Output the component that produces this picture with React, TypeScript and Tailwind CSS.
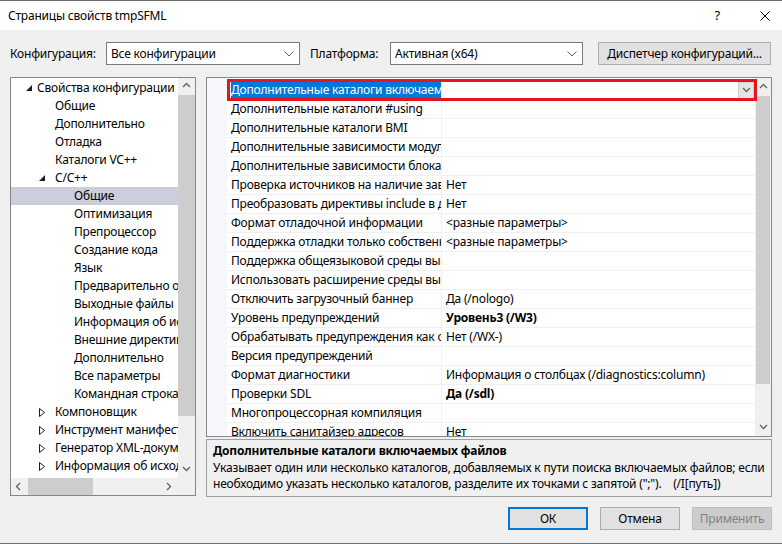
import React from "react";

type TreeItem = { text: string; level: 0 | 1 | 2; arrow?: "open" | "closed"; selected?: boolean };

const tree: TreeItem[] = [
  { text: "Свойства конфигурации", level: 0, arrow: "open" },
  { text: "Общие", level: 1 },
  { text: "Дополнительно", level: 1 },
  { text: "Отладка", level: 1 },
  { text: "Каталоги VC++", level: 1 },
  { text: "C/C++", level: 1, arrow: "open" },
  { text: "Общие", level: 2, selected: true },
  { text: "Оптимизация", level: 2 },
  { text: "Препроцессор", level: 2 },
  { text: "Создание кода", level: 2 },
  { text: "Язык", level: 2 },
  { text: "Предварительно откомпилированные заголовки", level: 2 },
  { text: "Выходные файлы", level: 2 },
  { text: "Информация об исходных файлах", level: 2 },
  { text: "Внешние директивы", level: 2 },
  { text: "Дополнительно", level: 2 },
  { text: "Все параметры", level: 2 },
  { text: "Командная строка", level: 2 },
  { text: "Компоновщик", level: 1, arrow: "closed" },
  { text: "Инструмент манифеста", level: 1, arrow: "closed" },
  { text: "Генератор XML-документов", level: 1, arrow: "closed" },
  { text: "Информация об исходном коде", level: 1, arrow: "closed" },
];

type Prop = { name: string; value?: string; bold?: boolean };

const props: Prop[] = [
  { name: "Дополнительные каталоги включаемых файлов" },
  { name: "Дополнительные каталоги #using" },
  { name: "Дополнительные каталоги BMI" },
  { name: "Дополнительные зависимости модулей" },
  { name: "Дополнительные зависимости блока заголовков" },
  { name: "Проверка источников на наличие зависимостей", value: "Нет" },
  { name: "Преобразовать директивы include в директивы import", value: "Нет" },
  { name: "Формат отладочной информации", value: "<разные параметры>" },
  { name: "Поддержка отладки только собственного кода", value: "<разные параметры>" },
  { name: "Поддержка общеязыковой среды выполнения" },
  { name: "Использовать расширение среды выполнения Windows" },
  { name: "Отключить загрузочный баннер", value: "Да (/nologo)" },
  { name: "Уровень предупреждений", value: "Уровень3 (/W3)", bold: true },
  { name: "Обрабатывать предупреждения как ошибки", value: "Нет (/WX-)" },
  { name: "Версия предупреждений" },
  { name: "Формат диагностики", value: "Информация о столбцах (/diagnostics:column)" },
  { name: "Проверки SDL", value: "Да (/sdl)", bold: true },
  { name: "Многопроцессорная компиляция" },
  { name: "Включить санитайзер адресов", value: "Нет" },
];

const Chevron = ({ dir }: { dir: "up" | "down" | "left" | "right" }) => {
  const pts = {
    up: "1,5 4.5,1.5 8,5",
    down: "1,2 4.5,5.5 8,2",
    left: "5,1 1.5,4.5 5,8",
    right: "2,1 5.5,4.5 2,8",
  }[dir];
  return (
    <svg width="9" height="9" viewBox="0 0 9 9">
      <polyline points={pts} fill="none" stroke="#606060" strokeWidth="1.3" />
    </svg>
  );
};

const Select = ({ value, w }: { value: string; w: string }) => (
  <div className={`${w} h-[23px] flex items-center bg-white border border-[#7a7a7a] pl-[4px] pr-[5px]`}>
    <span className="flex-1 text-[#000]">{value}</span>
    <svg width="10" height="6" viewBox="0 0 10 6">
      <polyline points="0.5,0.5 5,5 9.5,0.5" fill="none" stroke="#606060" strokeWidth="1" />
    </svg>
  </div>
);

export default function App() {
  return (
    <div
      className="w-[782px] h-[544px] flex flex-col border-t border-b border-[#6b6b6b] bg-[#f0f0f0] text-[12px] tracking-[-0.2px] text-black overflow-hidden"
      style={{ fontFamily: '"Segoe UI", "Noto Sans", sans-serif' }}
    >
      {/* Title bar */}
      <div className="h-[29px] bg-white flex items-center pl-[8px] shrink-0">
        <span className="flex-1 text-[12px]">Страницы свойств tmpSFML</span>
        <span className="mr-[40px] text-[13px]">?</span>
        <span className="mr-[12px] flex">
          <svg width="10" height="10" viewBox="0 0 10 10">
            <path d="M0.5,0.5 L9.5,9.5 M9.5,0.5 L0.5,9.5" stroke="#000" strokeWidth="1" />
          </svg>
        </span>
      </div>

      {/* Config row */}
      <div className="flex items-center mt-[12px] pl-[10px] h-[23px] shrink-0">
        <span className="w-[96px]">Конфигурация:</span>
        <Select value="Все конфигурации" w="w-[194px]" />
        <span className="ml-[10px] w-[80px]">Платформа:</span>
        <Select value="Активная (x64)" w="w-[193px]" />
        <div className="ml-[15px] w-[173px] h-[23px] border border-[#adadad] bg-[#e1e1e1] flex items-center justify-center">
          Диспетчер конфигураций...
        </div>
      </div>

      {/* Main area */}
      <div className="flex mt-[12px] pl-[10px] gap-[10px] shrink-0">
        {/* Tree */}
        <div className="w-[186px] h-[419px] border border-[#828790] bg-white flex flex-col">
          <div className="flex flex-1 min-h-0">
            <div className="flex-1 overflow-hidden pt-[1px]">
              {tree.map((t, i) => (
                <div
                  key={i}
                  className={`h-[18px] flex items-center whitespace-nowrap ${t.selected ? "bg-[#cccedb]" : ""} ${
                    t.level === 0 ? "pl-[15px]" : t.level === 1 ? "pl-[28px]" : "pl-[63px]"
                  }`}
                >
                  {t.level !== 2 && (
                    <span className={`${t.level === 0 ? "w-[11px]" : "w-[16px]"} shrink-0 flex items-center`}>
                      {t.arrow === "open" && (
                        <svg width="6" height="6" viewBox="0 0 6 6">
                          <polygon points="6,0 6,6 0,6" fill="#1e1e1e" />
                        </svg>
                      )}
                      {t.arrow === "closed" && (
                        <svg width="6" height="9" viewBox="0 0 6 9">
                          <polygon points="0.5,0.5 5.5,4.5 0.5,8.5" fill="none" stroke="#1e1e1e" strokeWidth="1" />
                        </svg>
                      )}
                    </span>
                  )}
                  <span className="shrink-0">{t.text}</span>
                </div>
              ))}
            </div>
            {/* vertical scrollbar */}
            <div className="w-[17px] shrink-0 bg-[#f0f0f0] flex flex-col items-center">
              <div className="h-[17px] flex items-center justify-center">
                <Chevron dir="up" />
              </div>
              <div className="w-[17px] h-[321px] bg-[#cdcdcd]" />
              <div className="flex-1" />
              <div className="h-[17px] flex items-center justify-center">
                <Chevron dir="down" />
              </div>
            </div>
          </div>
          {/* horizontal scrollbar */}
          <div className="h-[17px] flex bg-[#f0f0f0]">
            <div className="w-[17px] flex items-center justify-center">
              <Chevron dir="left" />
            </div>
            <div className="w-[65px] bg-[#cdcdcd]" />
            <div className="flex-1" />
            <div className="w-[17px] flex items-center justify-center">
              <Chevron dir="right" />
            </div>
            <div className="w-[17px] bg-[#f0f0f0]" />
          </div>
        </div>

        {/* Right column */}
        <div className="w-[566px] flex flex-col gap-[2px]">
          {/* Property grid */}
          <div className="h-[360px] border border-[#828790] bg-white flex relative">
            <div className="w-[20px] bg-[#f5f7fb]" />
            <div className="flex-1 overflow-hidden pt-[3px]">
              {props.map((p, i) => (
                <div key={i} className="h-[19px] flex border-b border-[#f0f0f0] whitespace-nowrap">
                  <div className="w-[215px] overflow-hidden border-r border-[#f0f0f0] flex items-center pl-[4px]">
                    <span className={`shrink-0 ${i === 0 ? "bg-[#0078d7] text-white pr-[1px]" : ""}`}>{p.name}</span>
                  </div>
                  <div className="flex-1 flex items-center pl-[4px] overflow-hidden">
                    <span className={p.bold ? "font-bold" : ""}>{p.value ?? ""}</span>
                    {i === 0 && (
                      <span className="ml-auto mr-[1px] w-[16px] h-[17px] bg-[#e5e5e5] border border-[#cfcfcf] flex items-center justify-center">
                        <Chevron dir="down" />
                      </span>
                    )}
                  </div>
                </div>
              ))}
            </div>
            {/* scrollbar */}
            <div className="w-[16px] bg-[#f0f0f0] flex flex-col items-center">
              <div className="h-[18px] flex items-center justify-center">
                <Chevron dir="up" />
              </div>
              <div className="w-[14px] h-[288px] bg-[#cdcdcd]" />
              <div className="flex-1" />
              <div className="h-[17px] flex items-center justify-center">
                <Chevron dir="down" />
              </div>
            </div>
            {/* red annotation box */}
            <div className="absolute left-[20px] top-[1px] w-[530px] h-[22px] border-[3px] border-[#e3161d]" />
          </div>

          {/* Description */}
          <div className="h-[58px] border border-[#a0a0a0] pl-[6px] pt-[3px] leading-[16px] whitespace-nowrap overflow-hidden">
            <div className="font-bold">Дополнительные каталоги включаемых файлов</div>
            <div className="mt-[1px]">
              Указывает один или несколько каталогов, добавляемых к пути поиска включаемых файлов; если
            </div>
            <div>
              необходимо указать несколько каталогов, разделите их точками с запятой (";").&nbsp;&nbsp;&nbsp;&nbsp;(/I[путь])
            </div>
          </div>
        </div>
      </div>

      {/* Buttons */}
      <div className="flex justify-end gap-[12px] pr-[10px] mt-[10px]">
        <div className="w-[80px] h-[23px] border-2 border-[#0078d7] bg-[#e1e1e1] flex items-center justify-center">
          ОК
        </div>
        <div className="w-[80px] h-[23px] border border-[#adadad] bg-[#e1e1e1] flex items-center justify-center">
          Отмена
        </div>
        <div className="w-[80px] h-[23px] border border-[#bfbfbf] bg-[#cccccc] text-[#838383] flex items-center justify-center">
          Применить
        </div>
      </div>
    </div>
  );
}
